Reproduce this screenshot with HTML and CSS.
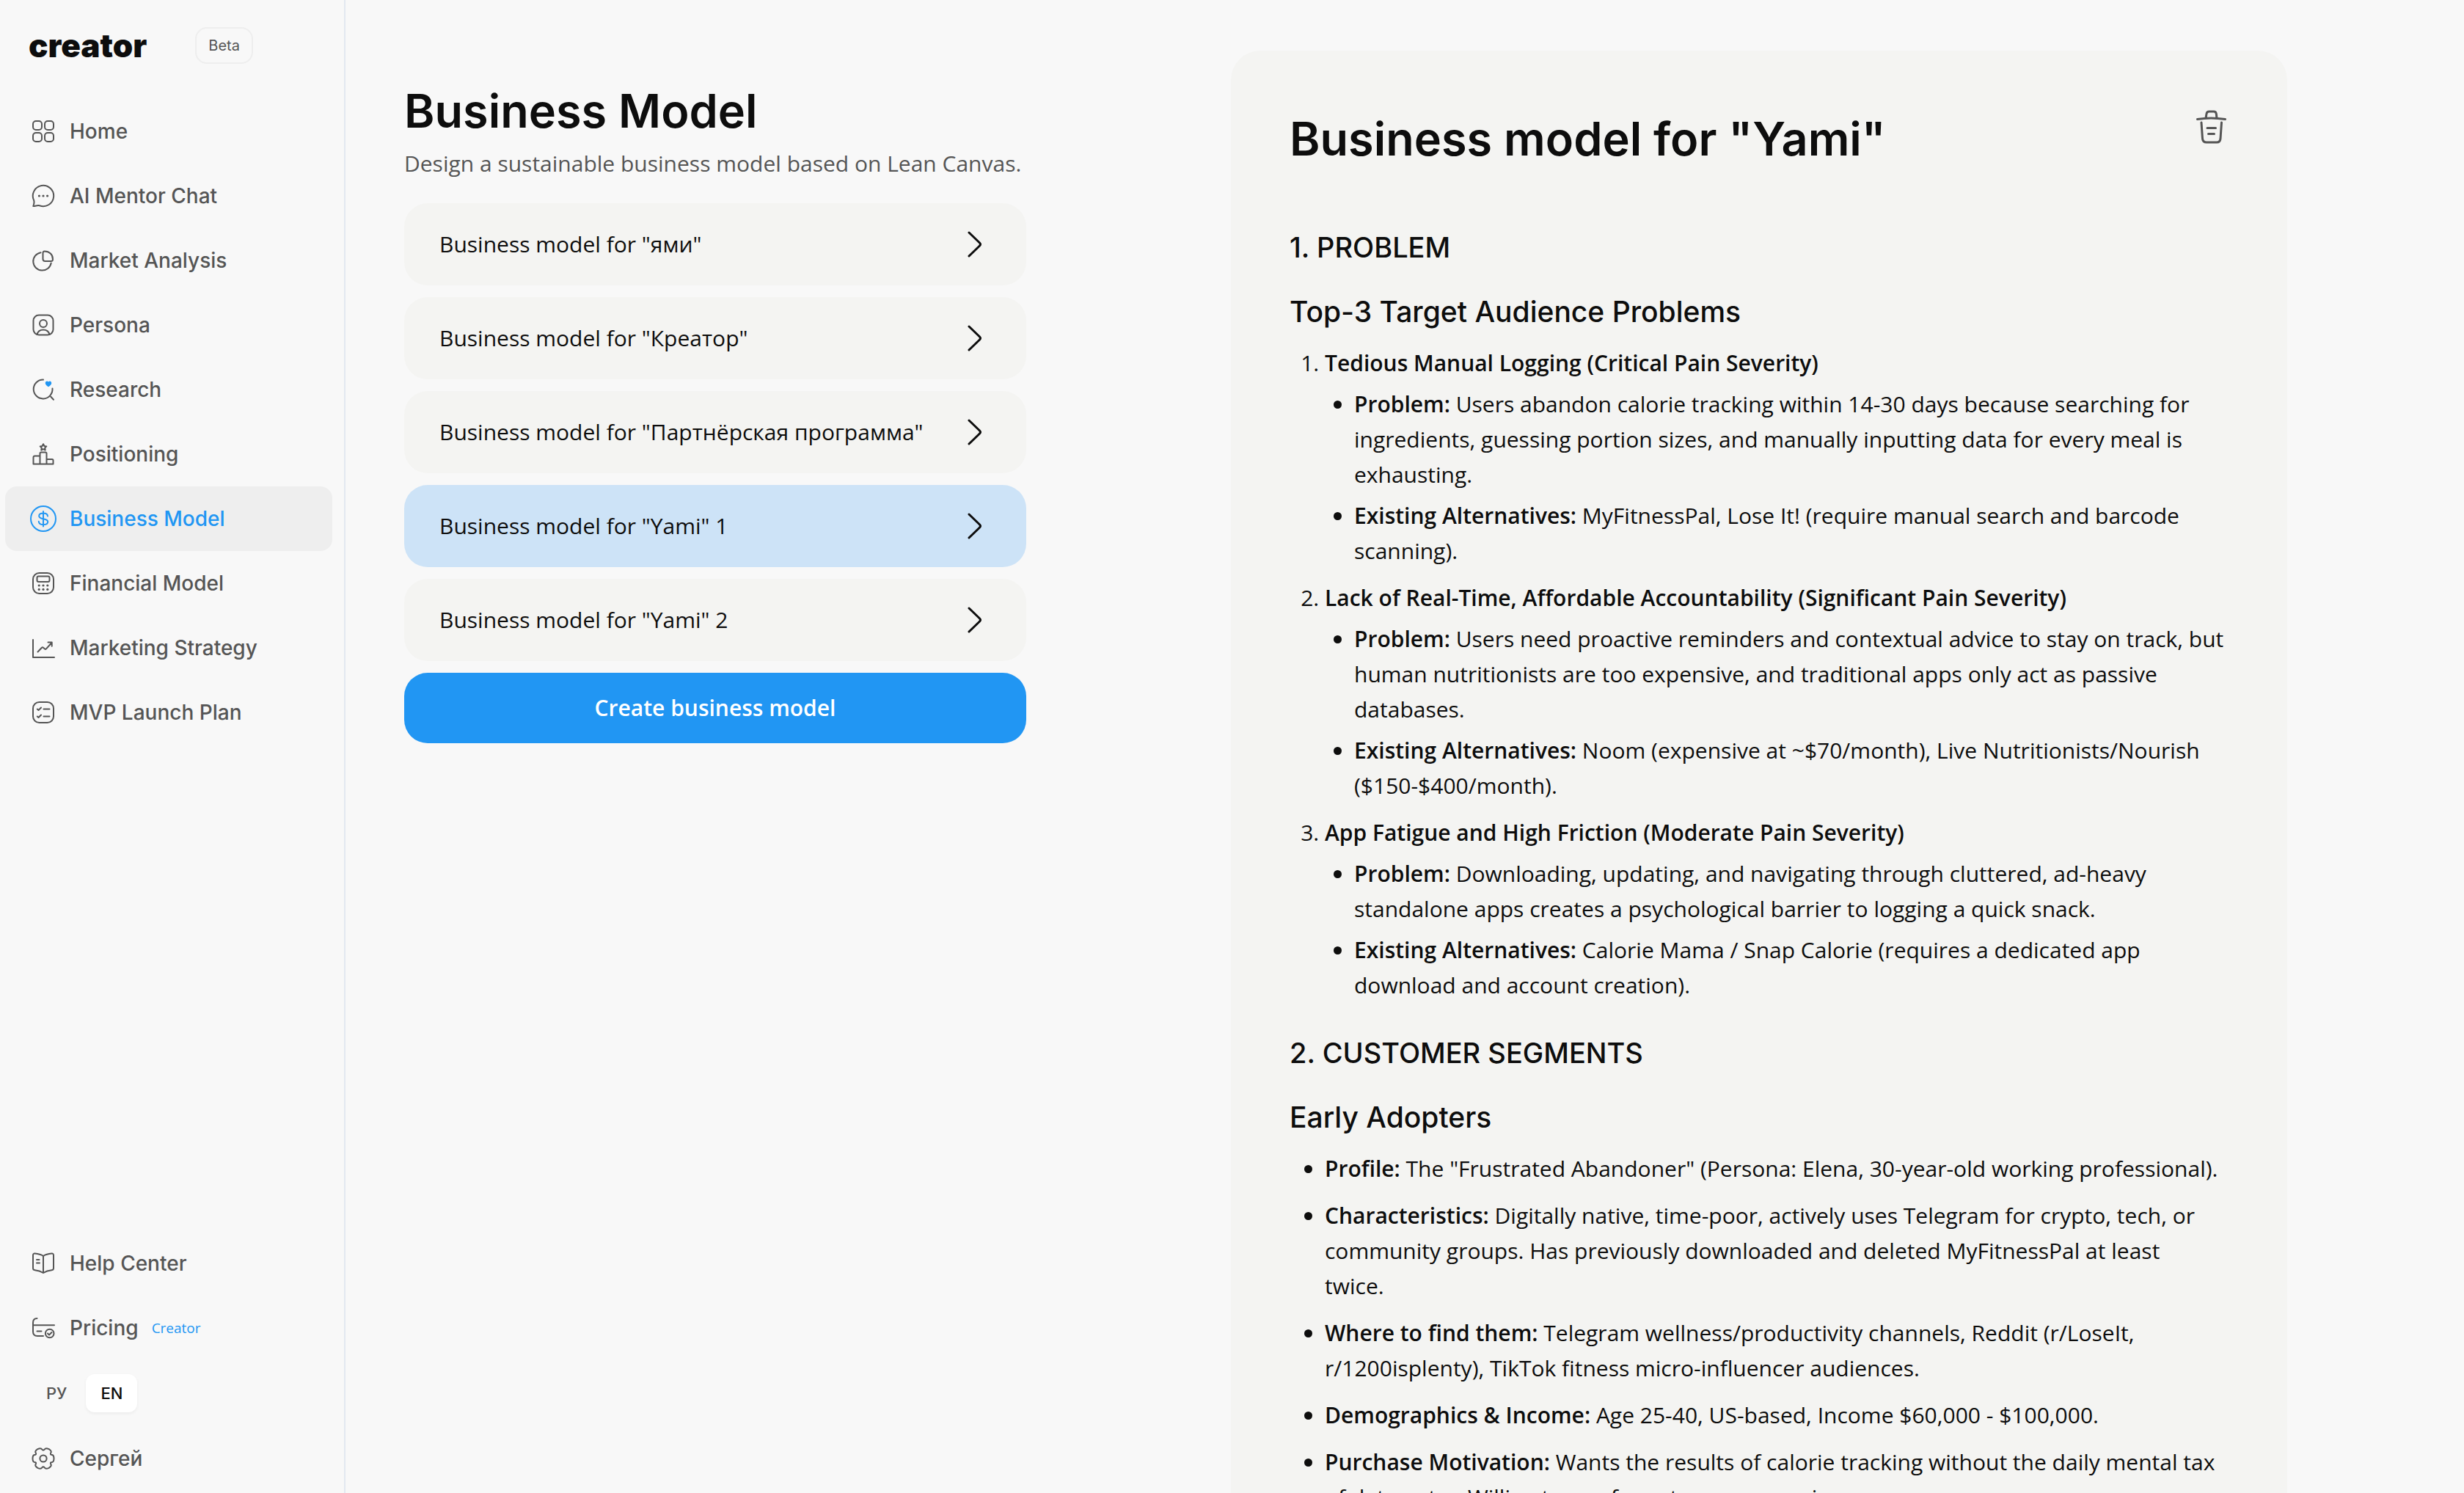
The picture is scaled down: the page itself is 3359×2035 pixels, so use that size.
FILE: index.html
```html
<!DOCTYPE html>
<html lang="en">
<head>
    <meta charset="UTF-8">
    <meta name="viewport" content="width=device-width, initial-scale=1.0">
    <title>Business Model - creator</title>
    <link rel="stylesheet" href="styles.css">
</head>
<body>
    <aside class="sidebar">
        <div class="brand">
            <a href="#" class="logo">creator</a>
            <span class="beta">Beta</span>
        </div>
        <nav class="nav">
            <a href="#" class="nav-item">
                <svg class="icon" viewBox="0 0 36 36"><rect x="4" y="4" width="12" height="12" rx="4"/><rect x="20" y="4" width="12" height="12" rx="4"/><rect x="4" y="20" width="12" height="12" rx="4"/><rect x="20" y="20" width="12" height="12" rx="4"/></svg>
                Home
            </a>
            <a href="#" class="nav-item">
                <svg class="icon" viewBox="0 0 36 36"><path d="M5.2 24.2A14.2 14.2 0 1 1 13 31.300C10.500 30.300 8 31.800 4.300 32C5.500 29 6 27 5.200 24.200Z"/><g class="dots"><circle cx="12.400" cy="18" r="1.600"/><circle cx="18" cy="18" r="1.600"/><circle cx="23.600" cy="18" r="1.600"/></g></svg>
                AI Mentor Chat
            </a>
            <a href="#" class="nav-item">
                <svg class="icon" viewBox="0 0 36 36"><path d="M14.500 7.200A12.300 12.300 0 1 0 28.700 21.500"/><path d="M19.600 5.500C26.500 5.500 31 10 31 16.500Q31 19 28.500 19H20.500Q17.500 19 17.500 16V8Q17.500 5.500 19.600 5.500Z"/></svg>
                Market Analysis
            </a>
            <a href="#" class="nav-item">
                <svg class="icon" viewBox="0 0 36 36"><rect x="4.500" y="4.500" width="27" height="27" rx="7.500"/><circle cx="18" cy="16" r="5"/><path d="M9.500 31C10.500 27 14 24.500 18 24.500S25.500 27 26.500 31"/></svg>
                Persona
            </a>
            <a href="#" class="nav-item">
                <svg class="icon" viewBox="0 0 36 36"><path d="M18 4.600A12.900 12.900 0 1 0 30.500 16.500M28.300 27.800L32 31.700"/><path class="heart" d="M25 14.200C21.500 12 20.800 10.500 20.800 9C20.800 6.300 23.800 5.700 25 7.600C26.200 5.700 29.200 6.300 29.200 9C29.200 10.500 28.500 12 25 14.200Z"/></svg>
                Research
            </a>
            <a href="#" class="nav-item">
                <svg class="icon" viewBox="0 0 36 36"><path d="M4.500 31.500V22.500Q4.500 20.500 6.500 20.500H13.500V17Q13.500 15.500 15 15.500H21Q22.500 15.500 22.500 17V25H30Q31.500 25 31.500 26.500V31.500ZM13.500 20.500V31M22.500 25V31"/><path d="M18 4.200L19.400 7L22.300 7.400L20.200 9.500L20.700 12.500L18 11.200L15.300 12.500L15.800 9.500L13.700 7.400L16.600 7Z"/></svg>
                Positioning
            </a>
            <a href="#" class="nav-item active">
                <svg class="icon" viewBox="0 0 36 36"><circle cx="18" cy="18" r="17"/><path d="M18 8V28.500M24 14.500C23.800 11.800 21.500 10.500 18 10.500C14.500 10.500 12.200 11.800 12.200 14.300C12.200 17 14.500 17.600 18 18.200C21.500 18.800 24.200 19.500 24.200 22.200C24.200 24.800 21.600 26.100 18 26.100C14.400 26.100 12 24.600 11.800 21.800"/></svg>
                Business Model
            </a>
            <a href="#" class="nav-item">
                <svg class="icon" viewBox="0 0 36 36"><rect x="4" y="4" width="28" height="28" rx="8.500"/><rect x="9.500" y="8.500" width="17" height="7.500" rx="2"/><g class="dots"><circle cx="12.200" cy="21" r="1.600"/><circle cx="18" cy="21" r="1.600"/><circle cx="23.800" cy="21" r="1.600"/><circle cx="12.200" cy="26.400" r="1.600"/><circle cx="18" cy="26.400" r="1.600"/><circle cx="23.800" cy="26.400" r="1.600"/></g></svg>
                Financial Model
            </a>
            <a href="#" class="nav-item">
                <svg class="icon" viewBox="0 0 36 36"><path d="M4 7V31H33M10.500 23.500L16 17.700Q17 16.800 18 17.700L20 19.500Q21 20.300 22 19.300L29.500 11M24.500 10.500H29.700V15.700"/></svg>
                Marketing Strategy
            </a>
            <a href="#" class="nav-item">
                <svg class="icon" viewBox="0 0 36 36"><rect x="4" y="4" width="28" height="28" rx="8.500"/><path d="M9.800 13.500L11.500 15L15 11.500M18.500 13.500H26.500M9.800 23.500L11.500 25L15 21.500M18.500 23.500H26.500"/></svg>
                MVP Launch Plan
            </a>
        </nav>
        <div class="nav-bottom">
            <a href="#" class="nav-item">
                <svg class="icon" viewBox="0 0 36 36"><path d="M18 8V31M18 8C15 6 11 5 6.500 4.600Q4 4.500 4 7V24.500Q4 27 6.500 27.200C11 27.600 15 29 18 31C21 29 25 27.600 29.500 27.200Q32 27 32 24.500V7Q32 4.500 29.500 4.600C25 5 21 6 18 8M9 12.900H12.500M9 17.500H13"/></svg>
                Help Center
            </a>
            <a href="#" class="nav-item">
                <svg class="icon" viewBox="0 0 36 36"><path d="M9.500 5Q4 5 4 11V23Q4 29 10 29H18M4 14.200H33M9.500 22.500H15.500"/><circle cx="26.700" cy="25.500" r="5.800"/><path d="M24 25.500L26 27.500L29.500 24"/></svg>
                Pricing
                <span class="plan">Creator</span>
            </a>
            <div class="languages">
                <button class="lang">РУ</button>
                <button class="lang selected">EN</button>
            </div>
            <a href="#" class="nav-item">
                <svg class="icon" viewBox="0 0 36 36"><path d="M32.500 18Q32.500 22.500 30 23Q26.800 23.100 28.400 25.900Q29.900 28.200 25.600 30.800Q21.300 33 19.600 30.300Q18 28.200 16.400 30.300Q14.700 33 10.400 30.800Q6.100 28.200 7.600 25.900Q9.200 23.100 6 23Q3.500 22.500 3.500 18Q3.500 13.500 6 13Q9.200 12.900 7.600 10.100Q6.100 7.800 10.400 5.200Q14.700 3 16.400 5.700Q18 7.800 19.600 5.700Q21.300 3 25.600 5.200Q29.900 7.800 28.400 10.100Q26.800 12.900 30 13Q32.500 13.500 32.500 18Z"/><circle cx="18" cy="18" r="4.600"/></svg>
                Сергей
            </a>
        </div>
    </aside>

    <main class="main">
        <section class="models">
            <h1 class="title">Business Model</h1>
            <p class="subtitle">Design a sustainable business model based on Lean Canvas.</p>
            <div class="model-list">
                <button class="model">Business model for "ями" <svg class="chevron" viewBox="0 0 20 36"><path d="M2 2L16.500 16Q18.500 18 16.500 20L2 34"/></svg></button>
                <button class="model">Business model for "Креатор" <svg class="chevron" viewBox="0 0 20 36"><path d="M2 2L16.500 16Q18.500 18 16.500 20L2 34"/></svg></button>
                <button class="model">Business model for "Партнёрская программа" <svg class="chevron" viewBox="0 0 20 36"><path d="M2 2L16.500 16Q18.500 18 16.500 20L2 34"/></svg></button>
                <button class="model current">Business model for "Yami" 1 <svg class="chevron" viewBox="0 0 20 36"><path d="M2 2L16.500 16Q18.500 18 16.500 20L2 34"/></svg></button>
                <button class="model">Business model for "Yami" 2 <svg class="chevron" viewBox="0 0 20 36"><path d="M2 2L16.500 16Q18.500 18 16.500 20L2 34"/></svg></button>
                <button class="create">Create business model</button>
            </div>
        </section>

        <article class="document">
            <header class="document-header">
                <h1 class="title">Business model for "Yami"</h1>
                <button class="delete" aria-label="Delete">
                    <svg viewBox="0 0 48 48"><path d="M5.500 13.500C17 11.500 31 11.500 43.500 13.500M17 12L18 6Q18.600 3 21.500 3H28Q30.800 3 31.300 6L32 12M11 18L12.500 40Q13 45 18 45H32Q36.500 45 37 40L38.500 18M19 25.500H30.500M20.500 33.500H28.500"/></svg>
                </button>
            </header>

            <h2>1. PROBLEM</h2>
            <h3>Top-3 Target Audience Problems</h3>
            <ol>
                <li><strong>Tedious Manual Logging (Critical Pain Severity)</strong>
                    <ul>
                        <li><strong>Problem:</strong> Users abandon calorie tracking within 14-30 days because searching for ingredients, guessing portion sizes, and manually inputting data for every meal is exhausting.</li>
                        <li><strong>Existing Alternatives:</strong> MyFitnessPal, Lose It! (require manual search and barcode scanning).</li>
                    </ul>
                </li>
                <li><strong>Lack of Real-Time, Affordable Accountability (Significant Pain Severity)</strong>
                    <ul>
                        <li><strong>Problem:</strong> Users need proactive reminders and contextual advice to stay on track, but human nutritionists are too expensive, and traditional apps only act as passive databases.</li>
                        <li><strong>Existing Alternatives:</strong> Noom (expensive at ~$70/month), Live Nutritionists/Nourish ($150-$400/month).</li>
                    </ul>
                </li>
                <li><strong>App Fatigue and High Friction (Moderate Pain Severity)</strong>
                    <ul>
                        <li><strong>Problem:</strong> Downloading, updating, and navigating through cluttered, ad-heavy standalone apps creates a psychological barrier to logging a quick snack.</li>
                        <li><strong>Existing Alternatives:</strong> Calorie Mama / Snap Calorie (requires a dedicated app download and account creation).</li>
                    </ul>
                </li>
            </ol>

            <h2>2. CUSTOMER SEGMENTS</h2>
            <h3>Early Adopters</h3>
            <ul>
                <li><strong>Profile:</strong> The "Frustrated Abandoner" (Persona: Elena, 30-year-old working professional).</li>
                <li><strong>Characteristics:</strong> Digitally native, time-poor, actively uses Telegram for crypto, tech, or community groups. Has previously downloaded and deleted MyFitnessPal at least<br>twice.</li>
                <li><strong>Where to find them:</strong> Telegram wellness/productivity channels, Reddit (r/LoseIt, r/1200isplenty), TikTok fitness micro-influencer audiences.</li>
                <li><strong>Demographics &amp; Income:</strong> Age 25-40, US-based, Income $60,000 - $100,000.</li>
                <li><strong>Purchase Motivation:</strong> Wants the results of calorie tracking without the daily mental tax of data entry. Willing to pay for extreme convenience.</li>
            </ul>
        </article>
    </main>
</body>
</html>
```
FILE: styles.css
```css
* {
    box-sizing: border-box;
}
body {
    font-family: "Open Sans", "Noto Sans", sans-serif;
    font-size: 30px;
    line-height: 48px;
    margin: 0;
    height: 100vh;
    display: flex;
    overflow: hidden;
    background: #f8f8f8;
    color: #0d0d0d;
}
button {
    font: inherit;
    color: inherit;
    border: none;
    background: none;
    padding: 0;
    cursor: pointer;
}
svg {
    fill: none;
    stroke: currentColor;
    stroke-linecap: round;
    stroke-linejoin: round;
    flex-shrink: 0;
}

/* sidebar */
.sidebar {
    width: 471px;
    flex-shrink: 0;
    display: flex;
    flex-direction: column;
    padding: 0 16px 3px 7px;
    border-right: 2px solid #e2e8f0;
    font-family: Inter, sans-serif;
}
.brand {
    display: flex;
    align-items: center;
    gap: 66px;
    height: 123px;
    margin-bottom: 12px;
    padding-left: 32px;
}
.logo {
    font-size: 44px;
    font-weight: 900;
    color: #0d0d0d;
    text-decoration: none;
}
.beta {
    font-size: 20px;
    line-height: 46px;
    padding: 0 16px;
    border: 2px solid #eeeeee;
    border-radius: 16px;
    color: #555555;
}
.nav {
    flex: 1;
}
.nav-item {
    display: flex;
    align-items: center;
    gap: 18px;
    height: 88px;
    padding-left: 34px;
    border-radius: 16px;
    font-size: 28px;
    font-weight: 500;
    color: #555555;
    text-decoration: none;
}
.nav-item.active {
    background: #eeeeee;
    color: #2196f3;
}
.icon {
    width: 36px;
    height: 36px;
    stroke-width: 2;
}
.dots {
    fill: currentColor;
    stroke: none;
}
.heart {
    fill: #2196f3;
    stroke: none;
}
.plan {
    font-family: "Open Sans", sans-serif;
    font-size: 19px;
    font-weight: 400;
    color: #2196f3;
}
.languages {
    display: flex;
    align-items: center;
    gap: 6px;
    height: 90px;
    padding-left: 36px;
}
.lang {
    height: 52px;
    padding: 0 20px;
    border-radius: 12px;
    font-size: 22px;
    font-weight: 500;
    color: #555555;
}
.lang.selected {
    background: #ffffff;
    color: #0d0d0d;
    box-shadow: 0 2px 4px rgba(0, 0, 0, 0.05);
}

/* content */
.main {
    flex: 1;
    display: flex;
    gap: 118px;
    padding: 69px 80px;
    overflow-y: auto;
    scrollbar-width: none;
}
.models {
    width: 848px;
    flex-shrink: 0;
    padding-top: 42px;
}
.title {
    font-family: Inter, sans-serif;
    font-size: 63px;
    line-height: 80px;
    font-weight: 600;
    margin: 0;
}
.subtitle {
    margin: 8px 0 30px;
    color: #555555;
}
.model-list {
    display: flex;
    flex-direction: column;
    gap: 16px;
}
.model {
    display: flex;
    align-items: center;
    justify-content: space-between;
    height: 112px;
    padding: 0 60px 0 48px;
    border-radius: 32px;
    background: #f4f4f2;
    text-align: left;
}
.model.current {
    background: #cde3f7;
}
.chevron {
    width: 20px;
    height: 36px;
    stroke-width: 3;
}
.create {
    height: 96px;
    border-radius: 32px;
    background: #2196f3;
    color: #ffffff;
    font-weight: 600;
}

/* document */
.document {
    width: 100%;
    max-width: 1440px;
    height: max-content;
    margin: 0 auto;
    padding: 80px;
    border-radius: 40px;
    background: #f4f4f2;
}
.document-header {
    display: flex;
    align-items: flex-start;
    justify-content: space-between;
}
.delete {
    color: #555555;
}
.delete svg {
    display: block;
    width: 48px;
    height: 48px;
    stroke-width: 3;
}
h2, h3 {
    font-family: Inter, sans-serif;
    line-height: 56px;
    font-weight: 500;
}
h2 {
    font-size: 38px;
    margin: 40px 0 0;
}
h3 {
    font-size: 39px;
    margin: 32px 0 0;
}
.document-header + h2 {
    margin-top: 80px;
}
strong {
    font-weight: 600;
}
ol, ul {
    margin: 18px 0 0;
    padding-left: 48px;
}
ul {
    list-style: disc;
}
li + li {
    margin-top: 16px;
}
li ul {
    margin-top: 8px;
    padding-left: 40px;
}
li li + li {
    margin-top: 8px;
}
```
